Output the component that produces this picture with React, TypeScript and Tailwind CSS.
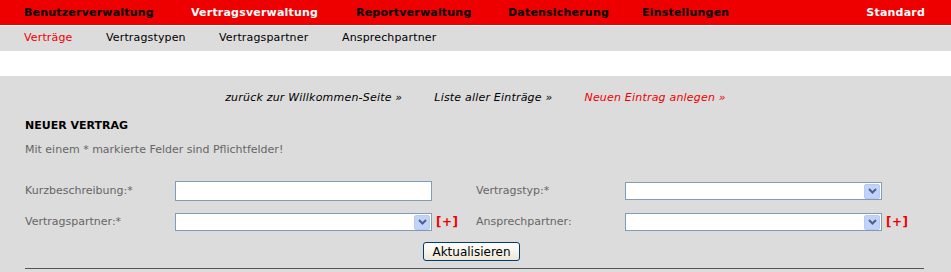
import React from "react";

const topMenu = [
  { label: "Benutzerverwaltung", active: false, w: "w-[167px]" },
  { label: "Vertragsverwaltung", active: true, w: "w-[165px]" },
  { label: "Reportverwaltung", active: false, w: "w-[152px]" },
  { label: "Datensicherung", active: false, w: "w-[134px]" },
  { label: "Einstellungen", active: false, w: "" },
];

const subMenu = [
  { label: "Verträge", w: "w-[82px]" },
  { label: "Vertragstypen", w: "w-[113px]" },
  { label: "Vertragspartner", w: "w-[123px]" },
  { label: "Ansprechpartner", w: "" },
];

const SelectBox = () => (
  <div className="flex h-[18px] w-[257px] items-center justify-end border border-[#7f9db9] bg-white pr-[1px]">
    <div className="flex h-[15px] w-[16px] items-center justify-center rounded-[2px] border border-[#b9c9ef] bg-[#c1d3fb]">
      <svg width="9" height="6" viewBox="0 0 9 6">
        <path d="M1 1 L4.5 4.5 L8 1" fill="none" stroke="#4d6185" strokeWidth="2" />
      </svg>
    </div>
  </div>
);

const Plus = () => (
  <span className="ml-[4px] text-[12px] font-bold tracking-[0.5px] text-[#ee0000]">[+]</span>
);

const App = () => {
  return (
    <div className="h-[272px] w-[951px] overflow-hidden bg-[#dcdcdc] font-['DejaVu_Sans',sans-serif] text-[11px]">
      <div className="flex h-[25px] items-center bg-[#ee0000] pl-[24px] pr-[26px] pt-[1px]">
        <div className="flex">
          {topMenu.map((m) => (
            <span
              key={m.label}
              className={`${m.w} font-bold tracking-[0.2px] ${m.active ? "text-white" : "text-black"}`}
            >
              {m.label}
            </span>
          ))}
        </div>
        <span className="ml-auto font-bold tracking-[0.2px] text-white">Standard</span>
      </div>
      <div className="h-[1px] bg-white" />
      <div className="flex h-[25px] items-center pl-[24px]">
        {subMenu.map((s, i) => (
          <span key={s.label} className={`${s.w} tracking-[0.15px] ${i === 0 ? "text-[#ee0000]" : "text-black"}`}>
            {s.label}
          </span>
        ))}
      </div>
      <div className="h-[25px] bg-white" />

      <div className="flex h-[41px] items-center justify-center gap-[32px] pt-[4px] italic tracking-[0.2px]">
        <span className="text-black">zurück zur Willkommen-Seite »</span>
        <span className="text-black">Liste aller Einträge »</span>
        <span className="text-[#ee0000]">Neuen Eintrag anlegen »</span>
      </div>

      <div className="px-[25px]">
        <div className="h-[18px] font-bold leading-[18px] text-black">NEUER VERTRAG</div>
        <div className="mt-[6px] h-[18px] leading-[18px] text-[#666666]">
          Mit einem * markierte Felder sind Pflichtfelder!
        </div>

        <div className="mt-[22px] flex h-[20px] items-center">
          <span className="w-[150px] text-[#666666]">Kurzbeschreibung:*</span>
          <div className="w-[301px]">
            <div className="h-[20px] w-[257px] border border-[#7f9db9] bg-white" />
          </div>
          <span className="w-[149px] text-[#666666]">Vertragstyp:*</span>
          <SelectBox />
        </div>

        <div className="mt-[11px] flex h-[20px] items-center">
          <span className="w-[150px] text-[#666666]">Vertragspartner:*</span>
          <div className="flex w-[301px] items-center">
            <SelectBox />
            <Plus />
          </div>
          <span className="w-[149px] text-[#666666]">Ansprechpartner:</span>
          <SelectBox />
          <Plus />
        </div>

        <div className="mt-[10px] flex">
          <button className="ml-[398px] h-[19px] w-[97px] rounded-[3px] border border-[#003c74] bg-gradient-to-b from-white to-[#ece9d8] text-[12px] leading-none text-black">
            Aktualisieren
          </button>
        </div>

        <div className="mt-[7px] h-[1px] w-[899px] bg-[#555555]" />
      </div>
    </div>
  );
};

export default App;
